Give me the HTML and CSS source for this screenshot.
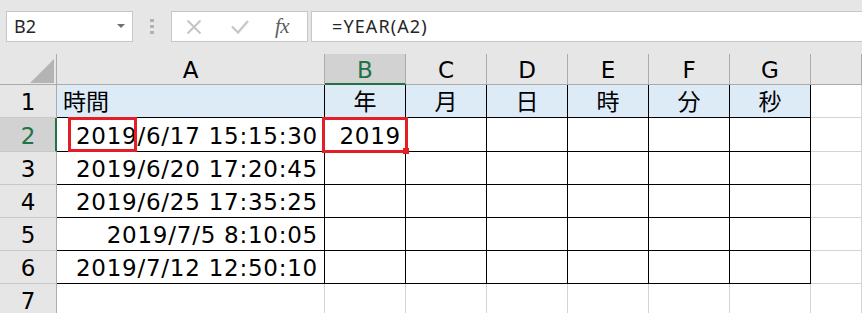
FILE: index.html
```html
<!DOCTYPE html>
<html lang="ja">
<head>
<meta charset="utf-8">
<title>YEAR</title>
<link rel="stylesheet" href="styles.css">
</head>
<body>
<div class="app">
  <div class="fbar">
    <div class="namebox"><span class="nb-text">B2</span><span class="caret"></span></div>
    <div class="grip"><i></i><i></i><i></i></div>
    <div class="fxbox">
      <svg class="ic-x" width="16" height="14" viewBox="0 0 16 14"><path d="M1.5 0.5L14.5 13.5M14.5 0.5L1.5 13.5" stroke="#c4c4c4" stroke-width="2" fill="none"/></svg>
      <svg class="ic-ok" width="18" height="14" viewBox="0 0 18 14"><path d="M1 6.5L7 12.5L17 1" stroke="#c8c8c8" stroke-width="2.4" fill="none"/></svg>
      <span class="fx">fx</span>
    </div>
    <div class="formula">=YEAR(A2)</div>
  </div>
  <div class="sheet">
    <div class="c hd corner"><span class="tri"></span></div>
    <div class="c hd">A</div>
    <div class="c hd selc">B</div>
    <div class="c hd">C</div>
    <div class="c hd">D</div>
    <div class="c hd">E</div>
    <div class="c hd">F</div>
    <div class="c hd">G</div>
    <div class="c hd"></div>

    <div class="c rh">1</div>
    <div class="c t hl">時間</div>
    <div class="c t hl ctr">年</div>
    <div class="c t hl ctr">月</div>
    <div class="c t hl ctr">日</div>
    <div class="c t hl ctr">時</div>
    <div class="c t hl ctr">分</div>
    <div class="c t hl ctr">秒</div>
    <div class="c"></div>

    <div class="c rh selr">2</div>
    <div class="c t r">2019/6/17 15:15:30</div>
    <div class="c t r rb">2019</div>
    <div class="c t"></div>
    <div class="c t"></div>
    <div class="c t"></div>
    <div class="c t"></div>
    <div class="c t"></div>
    <div class="c"></div>

    <div class="c rh">3</div>
    <div class="c t r">2019/6/20 17:20:45</div>
    <div class="c t"></div>
    <div class="c t"></div>
    <div class="c t"></div>
    <div class="c t"></div>
    <div class="c t"></div>
    <div class="c t"></div>
    <div class="c"></div>

    <div class="c rh">4</div>
    <div class="c t r">2019/6/25 17:35:25</div>
    <div class="c t"></div>
    <div class="c t"></div>
    <div class="c t"></div>
    <div class="c t"></div>
    <div class="c t"></div>
    <div class="c t"></div>
    <div class="c"></div>

    <div class="c rh">5</div>
    <div class="c t r">2019/7/5 8:10:05</div>
    <div class="c t"></div>
    <div class="c t"></div>
    <div class="c t"></div>
    <div class="c t"></div>
    <div class="c t"></div>
    <div class="c t"></div>
    <div class="c"></div>

    <div class="c rh">6</div>
    <div class="c t r">2019/7/12 12:50:10</div>
    <div class="c t"></div>
    <div class="c t"></div>
    <div class="c t"></div>
    <div class="c t"></div>
    <div class="c t"></div>
    <div class="c t"></div>
    <div class="c"></div>

    <div class="c rh">7</div>
    <div class="c"></div>
    <div class="c"></div>
    <div class="c"></div>
    <div class="c"></div>
    <div class="c"></div>
    <div class="c"></div>
    <div class="c"></div>
    <div class="c"></div>
  </div>
  <div class="mark mark-a"></div>
  <div class="mark mark-b"><i class="handle"></i></div>
</div>
</body>
</html>
```

FILE: styles.css
```css
* { box-sizing: border-box; }
html, body { margin: 0; padding: 0; }
body {
  background: #e6e6e6;
  width: 862px;
  height: 313px;
  overflow: hidden;
}
.app {
  position: relative;
  width: 862px;
  height: 313px;
  overflow: hidden;
  background: #e6e6e6;
}

/* formula bar */
.fbar {
  height: 54px;
  display: flex;
  align-items: flex-start;
  padding: 11px 0 0 6px;
  font-family: "Noto Sans", "Open Sans", sans-serif;
  font-size: 18px;
  color: #262626;
}
.namebox {
  width: 127px;
  height: 31px;
  background: #fff;
  border: 1px solid #c6c6c6;
  display: flex;
  align-items: center;
  justify-content: space-between;
  padding: 0 7px 0 7px;
}
.nb-text { line-height: 1.362; }
.caret {
  width: 0;
  height: 0;
  border-left: 4px solid transparent;
  border-right: 4px solid transparent;
  border-top: 4px solid #707070;
  margin-top: -2px;
}
.grip {
  width: 38px;
  height: 31px;
  display: flex;
  flex-direction: column;
  align-items: center;
  justify-content: center;
  gap: 3px;
}
.grip i {
  display: block;
  width: 4px;
  height: 3px;
  background: #b2b2b2;
}
.fxbox {
  width: 137px;
  height: 31px;
  background: #fff;
  border: 1px solid #c6c6c6;
  display: flex;
  align-items: center;
  padding-left: 14px;
}
.ic-x { display: block; }
.ic-ok { display: block; margin-left: 29px; }
.fx {
  margin-left: 26px;
  font-family: "Liberation Serif", "DejaVu Serif", serif;
  font-style: italic;
  font-size: 21px;
  color: #5e5e5e;
  letter-spacing: -0.5px;
  line-height: 1;
}
.formula {
  flex: 1;
  margin-left: 3px;
  margin-right: -10px;
  height: 31px;
  background: #fff;
  border: 1px solid #c6c6c6;
  display: flex;
  align-items: center;
  padding-left: 20px;
  letter-spacing: 1.1px;
  line-height: 1.362;
}

/* sheet */
.sheet {
  display: grid;
  grid-template-columns: 57px 268px 81px 81px 81px 81px 81px 81px 1fr;
  grid-template-rows: 31px 33px 34px 33px 33px 33px 33px 33px;
  font-family: "DejaVu Sans", "Noto Sans CJK JP", sans-serif;
  font-size: 23px;
  line-height: 1;
  color: #000;
}
.c {
  background: #fff;
  border-right: 1px solid #d4d4d4;
  border-bottom: 1px solid #d4d4d4;
  display: flex;
  align-items: flex-end;
  padding: 0 6px 3px 6px;
  white-space: nowrap;
  overflow: hidden;
}
.t {
  border-right-color: #000;
  border-bottom-color: #000;
}
.hl { background: #ddebf7; }
.r { justify-content: flex-end; letter-spacing: 0.75px; }
.rb { padding-right: 4px; }
.ctr { justify-content: center; }

.hd {
  background: #e6e6e6;
  border-right-color: #ababab;
  border-bottom-color: #ababab;
  justify-content: center;
  padding: 0 0 2px 0;
}
.selc {
  background: #d2d2d2;
  color: #217346;
  border-bottom: 2px solid #217346;
  padding-bottom: 1px;
}
.corner {
  justify-content: flex-end;
  padding: 0 2px 1px 0;
}
.tri {
  display: block;
  width: 24px;
  height: 24px;
  background: #b4b4b4;
  clip-path: polygon(100% 0, 100% 100%, 0 100%);
}
.rh {
  background: #e6e6e6;
  border-right-color: #ababab;
  border-bottom-color: #c8c8c8;
  justify-content: center;
  padding: 0 0 3px 0;
}
.selr {
  background: #d2d2d2;
  color: #217346;
  border-right: 2px solid #217346;
  padding-left: 1px;
}

/* red markers drawn over the grid */
.mark {
  position: absolute;
  border: 3px solid #e41e26;
}
.mark-a {
  left: 68px;
  top: 117px;
  width: 69px;
  height: 35px;
}
.mark-b {
  left: 322px;
  top: 117px;
  width: 86px;
  height: 36px;
}
.handle {
  position: absolute;
  right: -4px;
  bottom: -4px;
  width: 6px;
  height: 6px;
  background: #e41e26;
}
```
